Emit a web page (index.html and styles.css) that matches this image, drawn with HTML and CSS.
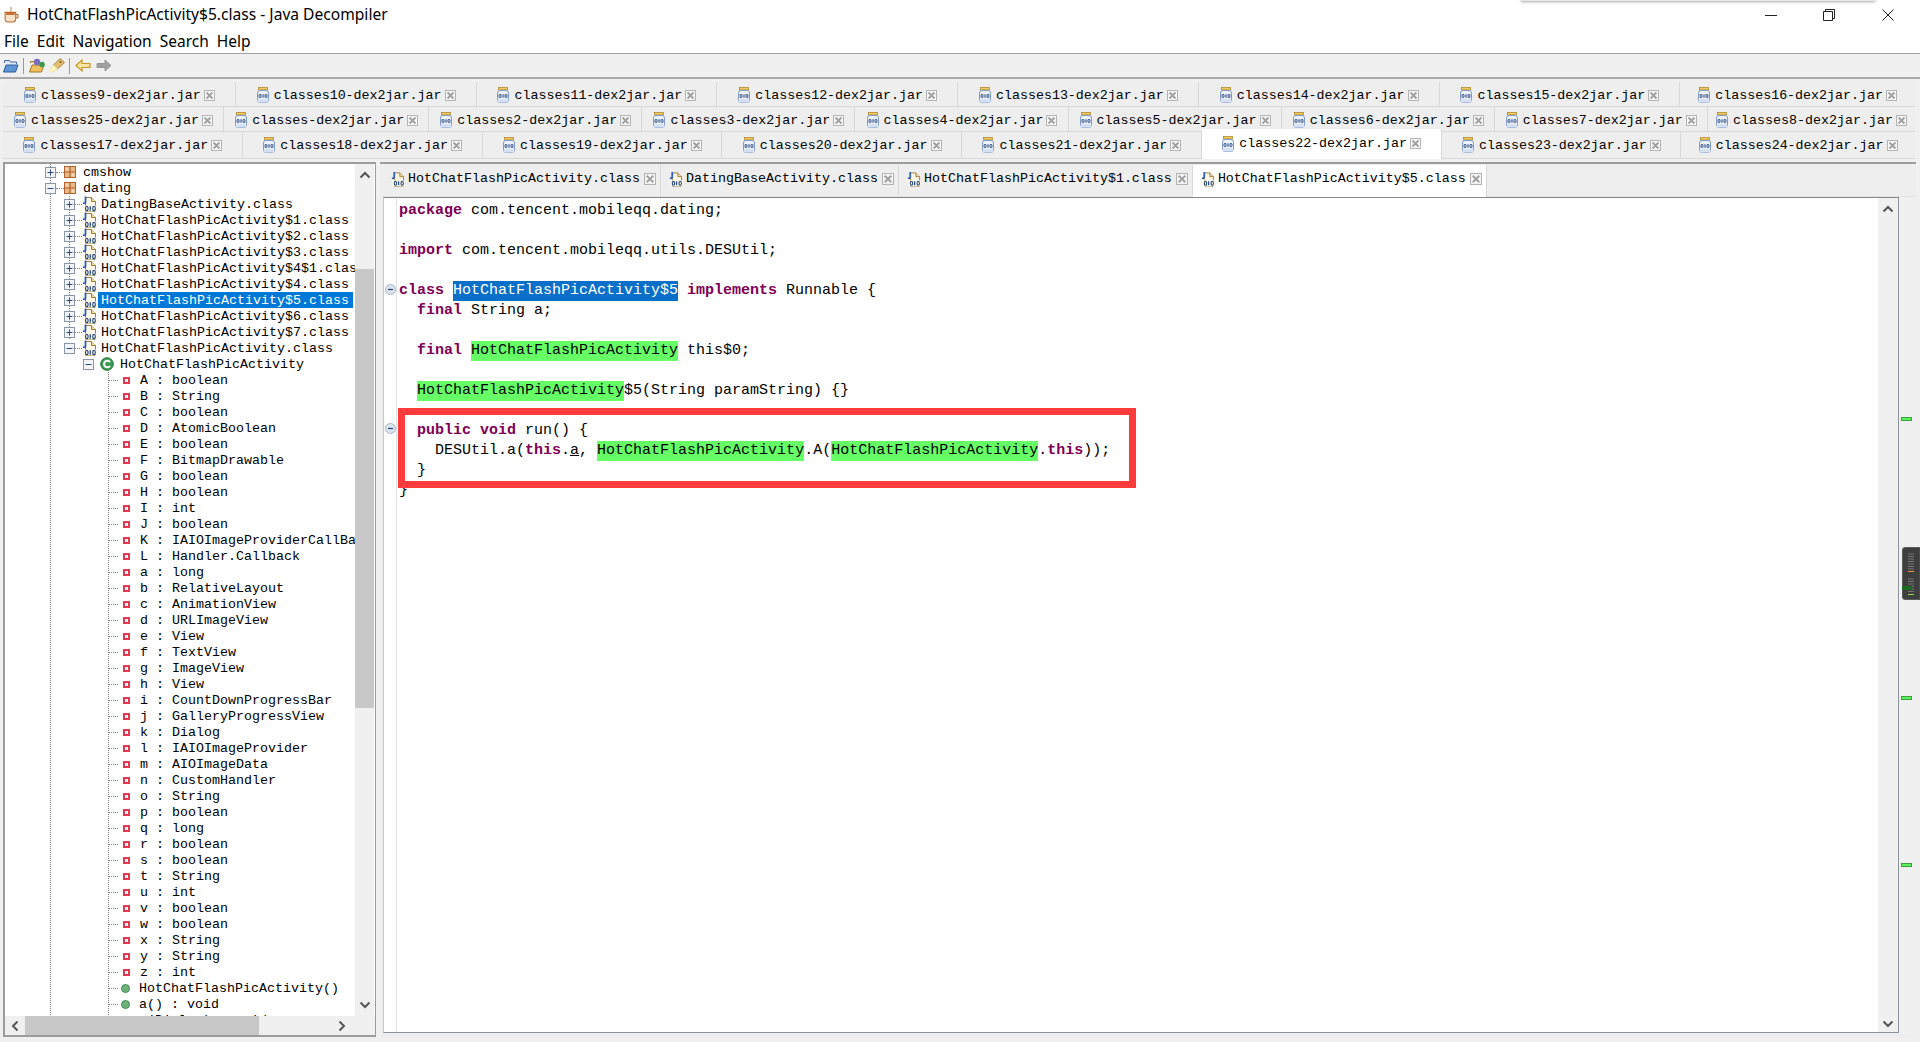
FILE: index.html
```html
<!DOCTYPE html>
<html lang="en">
<head>
<meta charset="utf-8">
<title>HotChatFlashPicActivity$5.class - Java Decompiler</title>
<link rel="stylesheet" href="styles.css">
</head>
<body>
<svg class="defs" width="0" height="0" aria-hidden="true">
  <symbol id="jar" viewBox="0 0 12 16">
    <rect x="1.5" y="0.5" width="9" height="2.5" fill="#f0c860" stroke="#b08a30" stroke-width="0.8"/>
    <rect x="0.5" y="3.5" width="11" height="12" rx="2.5" fill="#eef3fb" stroke="#7f9cc8"/>
    <rect x="0.5" y="12" width="11" height="3.5" rx="1.5" fill="#d5e0f2"/>
    <ellipse cx="3" cy="9" rx="1.1" ry="1.7" fill="none" stroke="#1d3f7a" stroke-width="0.9"/>
    <line x1="6" y1="7.2" x2="6" y2="10.8" stroke="#1d3f7a" stroke-width="1"/>
    <ellipse cx="9" cy="9" rx="1.1" ry="1.7" fill="none" stroke="#1d3f7a" stroke-width="0.9"/>
  </symbol>
  <symbol id="file" viewBox="0 0 15 16">
    <path d="M3.5 1.5h6l4 4v10h-10z" fill="#fdf8e8" stroke="#a07c34"/>
    <path d="M9.5 1.5v4h4" fill="#efe3c0" stroke="#a07c34"/>
    <path d="M3.5 0.5v5.5c0 1-1 1.500-2.500 1" fill="none" stroke="#2f5eb8" stroke-width="1.800"/>
    <rect x="1.500" y="9.500" width="13.500" height="6" fill="#fdf8e8"/>
    <ellipse cx="4.800" cy="12.500" rx="1.300" ry="2.200" fill="none" stroke="#163a78" stroke-width="1.100"/>
    <line x1="8.200" y1="10.300" x2="8.200" y2="14.700" stroke="#163a78" stroke-width="1.200"/>
    <ellipse cx="12" cy="12.500" rx="1.300" ry="2.200" fill="none" stroke="#163a78" stroke-width="1.100"/>
  </symbol>
  <symbol id="pkg" viewBox="0 0 12 12">
    <rect x="0.500" y="0.500" width="11" height="11" fill="#e8b888" stroke="#b0622c"/>
    <path d="M6 0v12M0 6h12" stroke="#b0622c" stroke-width="1.200"/>
    <path d="M1.500 1.500h3v3h-3zM7.500 7.500h3v3h-3z" fill="#f4d8b8"/>
  </symbol>
  <symbol id="plus" viewBox="0 0 11 11">
    <rect x="0.500" y="0.500" width="10" height="10" fill="#f2f4f8" stroke="#8b96a8"/>
    <path d="M2.500 5.500h6M5.500 2.500v6" stroke="#2b4a80"/>
  </symbol>
  <symbol id="minus" viewBox="0 0 11 11">
    <rect x="0.500" y="0.500" width="10" height="10" fill="#f2f4f8" stroke="#8b96a8"/>
    <path d="M2.500 5.500h6" stroke="#2b4a80"/>
  </symbol>
  <symbol id="close" viewBox="0 0 11 11">
    <rect x="0.500" y="0.500" width="10" height="10" fill="#f8f8f8" stroke="#b4b4b4"/>
    <path d="M2.500 2.500l6 6M8.500 2.500l-6 6" stroke="#a0a0a0" stroke-width="1.800"/>
  </symbol>
  <symbol id="field" viewBox="0 0 7 7">
    <rect width="7" height="7" fill="#e8374c"/>
    <rect x="2" y="2" width="3" height="3" fill="#fff"/>
  </symbol>
  <symbol id="method" viewBox="0 0 9 9">
    <circle cx="4.500" cy="4.500" r="4" fill="#6fb07a" stroke="#3f8a55"/>
  </symbol>
  <symbol id="cls" viewBox="0 0 14 14">
    <circle cx="7" cy="7" r="6.300" fill="#3f9a55" stroke="#1f7a38"/>
    <path d="M10 5a3.300 3.300 0 1 0 0 4" fill="none" stroke="#fff" stroke-width="2"/>
  </symbol>
  <symbol id="fold" viewBox="0 0 11 11">
    <circle cx="5.500" cy="5.500" r="5" fill="#dbe3ee" stroke="#a8b4c6"/>
    <path d="M3 5.500h5" stroke="#27406a" stroke-width="1.200"/>
  </symbol>
  <symbol id="up" viewBox="0 0 12 8"><path d="M1.500 6.500L6 2l4.500 4.500" fill="none" stroke="#555" stroke-width="2"/></symbol>
  <symbol id="down" viewBox="0 0 12 8"><path d="M1.500 1.500L6 6l4.500-4.500" fill="none" stroke="#555" stroke-width="2"/></symbol>
  <symbol id="left" viewBox="0 0 8 12"><path d="M6.500 1.500L2 6l4.500 4.500" fill="none" stroke="#555" stroke-width="2"/></symbol>
  <symbol id="right" viewBox="0 0 8 12"><path d="M1.500 1.500L6 6l-4.500 4.500" fill="none" stroke="#555" stroke-width="2"/></symbol>
</svg>

<header class="titlebar">
  <svg class="app-icon" viewBox="0 0 16 16">
    <path d="M8 1c-2 1 1 2-1 4" fill="none" stroke="#c08a50"/>
    <path d="M2 6h10v6c0 2-1 3-3 3H5c-2 0-3-1-3-3z" fill="#f6e2c8" stroke="#b8682c"/>
    <path d="M3 6.500h8v2H3z" fill="#c8702c"/>
    <path d="M12 8h2v3h-2" fill="none" stroke="#b8682c"/>
  </svg>
  <span class="title">HotChatFlashPicActivity$5.class - Java Decompiler</span>
  <div class="win-controls">
    <span class="win-btn"><svg width="12" height="12" viewBox="0 0 12 12"><path d="M0 6.500h12" stroke="#222"/></svg></span>
    <span class="win-btn"><svg width="12" height="12" viewBox="0 0 12 12"><path d="M.5 2.500h9v9h-9zM2.500 2.500v-2h9v9h-2" fill="none" stroke="#222"/></svg></span>
    <span class="win-btn"><svg width="12" height="12" viewBox="0 0 12 12"><path d="M.5.500l11 11M11.500.500l-11 11" stroke="#222"/></svg></span>
  </div>
</header>
<nav class="menubar"><span>File</span><span>Edit</span><span>Navigation</span><span>Search</span><span>Help</span></nav>
<div class="toolbar">
  <svg class="tb-icon" viewBox="0 0 16 15"><path d="M1.500 5V2.500h5l1 1.500h6v2" fill="#dce8f8" stroke="#4a6a9c"/><path d="M.5 14L3 7h12l-2.500 7z" fill="#5c96d8" stroke="#2f5a96"/></svg>
  <span class="tb-sep"></span>
  <svg class="tb-icon" viewBox="0 0 16 15"><path d="M1.500 5V3.500h4l1 1.500h6v2" fill="#f8e0a0" stroke="#a07820"/><path d="M.5 14L3 7h12l-2.500 7z" fill="#f0c060" stroke="#a07820"/><circle cx="8" cy="4" r="3.200" fill="#7a6cc0"/><circle cx="13" cy="6.500" r="2.800" fill="#3a9a50"/></svg>
  <svg class="tb-icon" viewBox="0 0 16 15"><path d="M11 .5l4.500 4-7 6.500-4-4z" fill="#e4bc70" stroke="#a88a44"/><path d="M4.500 7l4 4-6 3.500-2-2z" fill="#fff8c8" stroke="#ecdc98"/><circle cx="11.500" cy="4" r="1.100" fill="#806020"/></svg>
  <span class="tb-sep"></span>
  <svg class="tb-icon" viewBox="0 0 16 14"><path d="M1 7l6-5.500V5h8v4H7v3.500z" fill="#fbe6a8" stroke="#c8961e" stroke-width="1.200"/></svg>
  <svg class="tb-icon tb-next" viewBox="0 0 16 14"><path d="M15 7L9 1.500V5H1v4h8v3.500z" fill="#a0a0a0" stroke="#969696"/></svg>
</div>

<section class="tab-folder">
  <div class="tab-row">
    <div class="tab"><svg class="i-jar"><use href="#jar"/></svg><span class="tab-text">classes9-dex2jar.jar</span><svg class="i-close"><use href="#close"/></svg></div>
    <div class="tab"><svg class="i-jar"><use href="#jar"/></svg><span class="tab-text">classes10-dex2jar.jar</span><svg class="i-close"><use href="#close"/></svg></div>
    <div class="tab"><svg class="i-jar"><use href="#jar"/></svg><span class="tab-text">classes11-dex2jar.jar</span><svg class="i-close"><use href="#close"/></svg></div>
    <div class="tab"><svg class="i-jar"><use href="#jar"/></svg><span class="tab-text">classes12-dex2jar.jar</span><svg class="i-close"><use href="#close"/></svg></div>
    <div class="tab"><svg class="i-jar"><use href="#jar"/></svg><span class="tab-text">classes13-dex2jar.jar</span><svg class="i-close"><use href="#close"/></svg></div>
    <div class="tab"><svg class="i-jar"><use href="#jar"/></svg><span class="tab-text">classes14-dex2jar.jar</span><svg class="i-close"><use href="#close"/></svg></div>
    <div class="tab"><svg class="i-jar"><use href="#jar"/></svg><span class="tab-text">classes15-dex2jar.jar</span><svg class="i-close"><use href="#close"/></svg></div>
    <div class="tab"><svg class="i-jar"><use href="#jar"/></svg><span class="tab-text">classes16-dex2jar.jar</span><svg class="i-close"><use href="#close"/></svg></div>
  </div>
  <div class="tab-row">
    <div class="tab"><svg class="i-jar"><use href="#jar"/></svg><span class="tab-text">classes25-dex2jar.jar</span><svg class="i-close"><use href="#close"/></svg></div>
    <div class="tab"><svg class="i-jar"><use href="#jar"/></svg><span class="tab-text">classes-dex2jar.jar</span><svg class="i-close"><use href="#close"/></svg></div>
    <div class="tab"><svg class="i-jar"><use href="#jar"/></svg><span class="tab-text">classes2-dex2jar.jar</span><svg class="i-close"><use href="#close"/></svg></div>
    <div class="tab"><svg class="i-jar"><use href="#jar"/></svg><span class="tab-text">classes3-dex2jar.jar</span><svg class="i-close"><use href="#close"/></svg></div>
    <div class="tab"><svg class="i-jar"><use href="#jar"/></svg><span class="tab-text">classes4-dex2jar.jar</span><svg class="i-close"><use href="#close"/></svg></div>
    <div class="tab"><svg class="i-jar"><use href="#jar"/></svg><span class="tab-text">classes5-dex2jar.jar</span><svg class="i-close"><use href="#close"/></svg></div>
    <div class="tab"><svg class="i-jar"><use href="#jar"/></svg><span class="tab-text">classes6-dex2jar.jar</span><svg class="i-close"><use href="#close"/></svg></div>
    <div class="tab"><svg class="i-jar"><use href="#jar"/></svg><span class="tab-text">classes7-dex2jar.jar</span><svg class="i-close"><use href="#close"/></svg></div>
    <div class="tab"><svg class="i-jar"><use href="#jar"/></svg><span class="tab-text">classes8-dex2jar.jar</span><svg class="i-close"><use href="#close"/></svg></div>
  </div>
  <div class="tab-row tab-row-last">
    <div class="tab"><svg class="i-jar"><use href="#jar"/></svg><span class="tab-text">classes17-dex2jar.jar</span><svg class="i-close"><use href="#close"/></svg></div>
    <div class="tab"><svg class="i-jar"><use href="#jar"/></svg><span class="tab-text">classes18-dex2jar.jar</span><svg class="i-close"><use href="#close"/></svg></div>
    <div class="tab"><svg class="i-jar"><use href="#jar"/></svg><span class="tab-text">classes19-dex2jar.jar</span><svg class="i-close"><use href="#close"/></svg></div>
    <div class="tab"><svg class="i-jar"><use href="#jar"/></svg><span class="tab-text">classes20-dex2jar.jar</span><svg class="i-close"><use href="#close"/></svg></div>
    <div class="tab"><svg class="i-jar"><use href="#jar"/></svg><span class="tab-text">classes21-dex2jar.jar</span><svg class="i-close"><use href="#close"/></svg></div>
    <div class="tab tab-active"><svg class="i-jar"><use href="#jar"/></svg><span class="tab-text">classes22-dex2jar.jar</span><svg class="i-close"><use href="#close"/></svg></div>
    <div class="tab"><svg class="i-jar"><use href="#jar"/></svg><span class="tab-text">classes23-dex2jar.jar</span><svg class="i-close"><use href="#close"/></svg></div>
    <div class="tab"><svg class="i-jar"><use href="#jar"/></svg><span class="tab-text">classes24-dex2jar.jar</span><svg class="i-close"><use href="#close"/></svg></div>
  </div>
</section>

<main class="workspace">
  <aside class="tree-panel">
    <div class="tree-body">
      <div class="tree">
        <div class="row l1"><svg class="exp"><use href="#plus"/></svg><i class="conn"></i><svg class="i-pkg"><use href="#pkg"/></svg><span class="lbl">cmshow</span></div>
        <div class="row l1"><svg class="exp"><use href="#minus"/></svg><i class="conn"></i><svg class="i-pkg"><use href="#pkg"/></svg><span class="lbl">dating</span></div>
        <div class="row l2"><svg class="exp"><use href="#plus"/></svg><i class="conn"></i><svg class="i-file"><use href="#file"/></svg><span class="lbl">DatingBaseActivity.class</span></div>
        <div class="row l2"><svg class="exp"><use href="#plus"/></svg><i class="conn"></i><svg class="i-file"><use href="#file"/></svg><span class="lbl">HotChatFlashPicActivity$1.class</span></div>
        <div class="row l2"><svg class="exp"><use href="#plus"/></svg><i class="conn"></i><svg class="i-file"><use href="#file"/></svg><span class="lbl">HotChatFlashPicActivity$2.class</span></div>
        <div class="row l2"><svg class="exp"><use href="#plus"/></svg><i class="conn"></i><svg class="i-file"><use href="#file"/></svg><span class="lbl">HotChatFlashPicActivity$3.class</span></div>
        <div class="row l2"><svg class="exp"><use href="#plus"/></svg><i class="conn"></i><svg class="i-file"><use href="#file"/></svg><span class="lbl">HotChatFlashPicActivity$4$1.class</span></div>
        <div class="row l2"><svg class="exp"><use href="#plus"/></svg><i class="conn"></i><svg class="i-file"><use href="#file"/></svg><span class="lbl">HotChatFlashPicActivity$4.class</span></div>
        <div class="row l2"><svg class="exp"><use href="#plus"/></svg><i class="conn"></i><svg class="i-file"><use href="#file"/></svg><span class="lbl lbl-sel">HotChatFlashPicActivity$5.class</span></div>
        <div class="row l2"><svg class="exp"><use href="#plus"/></svg><i class="conn"></i><svg class="i-file"><use href="#file"/></svg><span class="lbl">HotChatFlashPicActivity$6.class</span></div>
        <div class="row l2"><svg class="exp"><use href="#plus"/></svg><i class="conn"></i><svg class="i-file"><use href="#file"/></svg><span class="lbl">HotChatFlashPicActivity$7.class</span></div>
        <div class="row l2 l2-end"><svg class="exp"><use href="#minus"/></svg><i class="conn"></i><svg class="i-file"><use href="#file"/></svg><span class="lbl">HotChatFlashPicActivity.class</span></div>
        <div class="row l3"><svg class="exp"><use href="#minus"/></svg><svg class="i-cls"><use href="#cls"/></svg><span class="lbl">HotChatFlashPicActivity</span></div>
        <div class="row l4"><i class="conn"></i><svg class="i-field"><use href="#field"/></svg><span class="lbl">A : boolean</span></div>
        <div class="row l4"><i class="conn"></i><svg class="i-field"><use href="#field"/></svg><span class="lbl">B : String</span></div>
        <div class="row l4"><i class="conn"></i><svg class="i-field"><use href="#field"/></svg><span class="lbl">C : boolean</span></div>
        <div class="row l4"><i class="conn"></i><svg class="i-field"><use href="#field"/></svg><span class="lbl">D : AtomicBoolean</span></div>
        <div class="row l4"><i class="conn"></i><svg class="i-field"><use href="#field"/></svg><span class="lbl">E : boolean</span></div>
        <div class="row l4"><i class="conn"></i><svg class="i-field"><use href="#field"/></svg><span class="lbl">F : BitmapDrawable</span></div>
        <div class="row l4"><i class="conn"></i><svg class="i-field"><use href="#field"/></svg><span class="lbl">G : boolean</span></div>
        <div class="row l4"><i class="conn"></i><svg class="i-field"><use href="#field"/></svg><span class="lbl">H : boolean</span></div>
        <div class="row l4"><i class="conn"></i><svg class="i-field"><use href="#field"/></svg><span class="lbl">I : int</span></div>
        <div class="row l4"><i class="conn"></i><svg class="i-field"><use href="#field"/></svg><span class="lbl">J : boolean</span></div>
        <div class="row l4"><i class="conn"></i><svg class="i-field"><use href="#field"/></svg><span class="lbl">K : IAIOImageProviderCallBack</span></div>
        <div class="row l4"><i class="conn"></i><svg class="i-field"><use href="#field"/></svg><span class="lbl">L : Handler.Callback</span></div>
        <div class="row l4"><i class="conn"></i><svg class="i-field"><use href="#field"/></svg><span class="lbl">a : long</span></div>
        <div class="row l4"><i class="conn"></i><svg class="i-field"><use href="#field"/></svg><span class="lbl">b : RelativeLayout</span></div>
        <div class="row l4"><i class="conn"></i><svg class="i-field"><use href="#field"/></svg><span class="lbl">c : AnimationView</span></div>
        <div class="row l4"><i class="conn"></i><svg class="i-field"><use href="#field"/></svg><span class="lbl">d : URLImageView</span></div>
        <div class="row l4"><i class="conn"></i><svg class="i-field"><use href="#field"/></svg><span class="lbl">e : View</span></div>
        <div class="row l4"><i class="conn"></i><svg class="i-field"><use href="#field"/></svg><span class="lbl">f : TextView</span></div>
        <div class="row l4"><i class="conn"></i><svg class="i-field"><use href="#field"/></svg><span class="lbl">g : ImageView</span></div>
        <div class="row l4"><i class="conn"></i><svg class="i-field"><use href="#field"/></svg><span class="lbl">h : View</span></div>
        <div class="row l4"><i class="conn"></i><svg class="i-field"><use href="#field"/></svg><span class="lbl">i : CountDownProgressBar</span></div>
        <div class="row l4"><i class="conn"></i><svg class="i-field"><use href="#field"/></svg><span class="lbl">j : GalleryProgressView</span></div>
        <div class="row l4"><i class="conn"></i><svg class="i-field"><use href="#field"/></svg><span class="lbl">k : Dialog</span></div>
        <div class="row l4"><i class="conn"></i><svg class="i-field"><use href="#field"/></svg><span class="lbl">l : IAIOImageProvider</span></div>
        <div class="row l4"><i class="conn"></i><svg class="i-field"><use href="#field"/></svg><span class="lbl">m : AIOImageData</span></div>
        <div class="row l4"><i class="conn"></i><svg class="i-field"><use href="#field"/></svg><span class="lbl">n : CustomHandler</span></div>
        <div class="row l4"><i class="conn"></i><svg class="i-field"><use href="#field"/></svg><span class="lbl">o : String</span></div>
        <div class="row l4"><i class="conn"></i><svg class="i-field"><use href="#field"/></svg><span class="lbl">p : boolean</span></div>
        <div class="row l4"><i class="conn"></i><svg class="i-field"><use href="#field"/></svg><span class="lbl">q : long</span></div>
        <div class="row l4"><i class="conn"></i><svg class="i-field"><use href="#field"/></svg><span class="lbl">r : boolean</span></div>
        <div class="row l4"><i class="conn"></i><svg class="i-field"><use href="#field"/></svg><span class="lbl">s : boolean</span></div>
        <div class="row l4"><i class="conn"></i><svg class="i-field"><use href="#field"/></svg><span class="lbl">t : String</span></div>
        <div class="row l4"><i class="conn"></i><svg class="i-field"><use href="#field"/></svg><span class="lbl">u : int</span></div>
        <div class="row l4"><i class="conn"></i><svg class="i-field"><use href="#field"/></svg><span class="lbl">v : boolean</span></div>
        <div class="row l4"><i class="conn"></i><svg class="i-field"><use href="#field"/></svg><span class="lbl">w : boolean</span></div>
        <div class="row l4"><i class="conn"></i><svg class="i-field"><use href="#field"/></svg><span class="lbl">x : String</span></div>
        <div class="row l4"><i class="conn"></i><svg class="i-field"><use href="#field"/></svg><span class="lbl">y : String</span></div>
        <div class="row l4"><i class="conn"></i><svg class="i-field"><use href="#field"/></svg><span class="lbl">z : int</span></div>
        <div class="row l4"><i class="conn"></i><svg class="i-method"><use href="#method"/></svg><span class="lbl">HotChatFlashPicActivity()</span></div>
        <div class="row l4"><i class="conn"></i><svg class="i-method"><use href="#method"/></svg><span class="lbl">a() : void</span></div>
        <div class="row l4"><i class="conn"></i><svg class="i-method"><use href="#method"/></svg><span class="lbl">a(Dialog) : void</span></div>
      </div>
      <div class="vscroll tree-vscroll">
        <svg class="chev-v"><use href="#up"/></svg>
        <div class="tree-track"><div class="tree-thumb"></div></div>
        <svg class="chev-v"><use href="#down"/></svg>
      </div>
    </div>
    <div class="hscroll">
      <svg class="chev-h"><use href="#left"/></svg>
      <div class="hthumb"></div>
      <svg class="chev-h chev-right"><use href="#right"/></svg>
    </div>
  </aside>

  <section class="editor-panel">
    <div class="editor-tabs">
      <div class="etab"><svg class="i-file"><use href="#file"/></svg><span class="tab-text">HotChatFlashPicActivity.class</span><svg class="i-close"><use href="#close"/></svg></div>
      <div class="etab"><svg class="i-file"><use href="#file"/></svg><span class="tab-text">DatingBaseActivity.class</span><svg class="i-close"><use href="#close"/></svg></div>
      <div class="etab"><svg class="i-file"><use href="#file"/></svg><span class="tab-text">HotChatFlashPicActivity$1.class</span><svg class="i-close"><use href="#close"/></svg></div>
      <div class="etab etab-active"><svg class="i-file"><use href="#file"/></svg><span class="tab-text">HotChatFlashPicActivity$5.class</span><svg class="i-close"><use href="#close"/></svg></div>
    </div>
    <div class="editor-wrap">
      <div class="editor">
        <div class="gutter">
          <svg class="i-fold fold-class"><use href="#fold"/></svg>
          <svg class="i-fold fold-run"><use href="#fold"/></svg>
        </div>
        <div class="code">
          <div class="ln"><b>package</b> com.tencent.mobileqq.dating;</div>
          <div class="ln"></div>
          <div class="ln"><b>import</b> com.tencent.mobileqq.utils.DESUtil;</div>
          <div class="ln"></div>
          <div class="ln"><b>class</b> <span class="sel">HotChatFlashPicActivity$5</span> <b>implements</b> Runnable {</div>
          <div class="ln">  <b>final</b> String a;</div>
          <div class="ln"></div>
          <div class="ln">  <b>final</b> <span class="hit">HotChatFlashPicActivity</span> this$0;</div>
          <div class="ln"></div>
          <div class="ln">  <span class="hit">HotChatFlashPicActivity</span>$5(String paramString) {}</div>
          <div class="ln"></div>
          <div class="ln">  <b>public void</b> run() {</div>
          <div class="ln">    DESUtil.a(<b>this</b>.<u>a</u>, <span class="hit">HotChatFlashPicActivity</span>.A(<span class="hit">HotChatFlashPicActivity</span>.<b>this</b>));</div>
          <div class="ln">  }</div>
          <div class="ln">}</div>
          <div class="red-box"></div>
        </div>
        <div class="vscroll editor-vscroll">
          <svg class="chev-v"><use href="#up"/></svg>
          <svg class="chev-v"><use href="#down"/></svg>
        </div>
      </div>
      <div class="ruler">
        <i class="mark mark-1"></i>
        <i class="mark mark-2"></i>
        <i class="mark mark-3"></i>
      </div>
    </div>
  </section>
</main>

<div class="top-shadow"></div>
<svg class="float-widget" width="18" height="53" viewBox="0 0 18 53">
  <path d="M3 .5H18v52H3a2.500 2.500 0 0 1-2.500-2.500V3A2.500 2.500 0 0 1 3 .5z" fill="#3e3e3e" stroke="#5a5a5a"/>
  <path d="M6 7h6M6 9.500h6M6 12h6M6 14.500h6M6 17h6M6 19.500h6M6 22h6M6 32h6M6 34.500h6M6 37h6M6 39.500h6M6 42h6M6 44.500h6" stroke="#777"/>
  <path d="M6 24.500h6" stroke="#e89a2c"/>
  <path d="M6 47.500h6" stroke="#8fe04c"/>
  <rect x="0" y="39" width="10" height="4" fill="#1a6a24"/>
</svg>
</body>
</html>
```
FILE: styles.css
```css
* { box-sizing: border-box; }
html, body { margin: 0; padding: 0; }
body {
  width: 1920px;
  height: 1042px;
  overflow: hidden;
  background: #f0f0f0;
  display: flex;
  flex-direction: column;
  font-family: "Liberation Mono", monospace;
  font-size: 13.33px;
  color: #000;
  position: relative;
}
.defs { position: absolute; }
svg { display: block; flex: none; }

.titlebar {
  height: 29px;
  background: #fff;
  display: flex;
  align-items: center;
  padding-left: 3px;
  flex: none;
}
.app-icon { width: 17px; height: 17px; margin-right: 7px; }
.title { font-family: "Noto Sans", sans-serif; font-size: 15.6px; color: #000; margin-bottom: 2px; }
.win-controls { margin-left: auto; display: flex; padding-right: 3px; }
.win-btn { width: 58.5px; display: flex; justify-content: center; align-items: center; height: 29px; }

.menubar {
  height: 25px;
  background: #fff;
  border-bottom: 1px solid #a0a0a0;
  display: flex;
  gap: 8px;
  align-items: center;
  padding: 0 0 0 4px;
  font-family: "Noto Sans", sans-serif;
  font-size: 15.5px;
  flex: none;
}

.toolbar {
  height: 25px;
  background: #f0f0f0;
  border-bottom: 2px solid #a9a9a9;
  display: flex;
  align-items: center;
  padding-left: 3px;
  flex: none;
}
.tb-icon { width: 16px; height: 15px; margin-right: 4px; }
.tb-next { margin-left: 1px; }
.tb-sep { width: 1px; height: 16px; background: #9a9a9a; margin: 0 5px 0 0; }

.tab-folder { padding: 3px 5px 3px 3px; flex: none; }
.tab-row { display: flex; height: 25px; border-bottom: 1px solid #d8d8d8; background: #eeeeee; }
.tab-row-last { height: 27px; }
.tab {
  flex: 1 1 auto;
  display: flex;
  align-items: center;
  justify-content: center;
  padding: 2px 2px 0 3px;
  border-right: 1px solid #d8d8d8;
  white-space: nowrap;
}
.tab-row-last .tab { padding-top: 0; }
.tab-row .tab:last-child { border-right: 0; padding-left: 0; padding-right: 0; }
.tab-row-last .tab-active {
  background: #fff;
  height: 30px;
  margin-top: -3px;
  padding-bottom: 1px;
}
.tab-text { color: #000; }
.i-jar { width: 12px; height: 16px; margin-right: 5px; }
.i-close { width: 11px; height: 11px; margin-left: 3px; }

.workspace {
  flex: 1;
  min-height: 0;
  display: flex;
  gap: 4px;
  padding: 0 4px 5px 3px;
}

.tree-panel {
  width: 373px;
  border: 2px solid #9c9c9c;
  border-right-width: 1px;
  display: flex;
  flex-direction: column;
  background: #fff;
}
.tree-body { flex: 1; min-height: 0; display: flex; }
.tree { width: 350px; overflow: hidden; background: #fff; }

.row {
  height: 16px;
  display: flex;
  align-items: center;
  white-space: nowrap;
  background-repeat: repeat-y;
  background-size: 1px 2px;
  background-image: linear-gradient(#808080 50%, transparent 50%);
  background-position: 45px 0;
}
.lbl { line-height: 18px; height: 16px; color: #000; }
.lbl-sel { background: #0078d7; color: #fff; padding: 0 4px 0 3px; margin-left: -3px; }
.exp { width: 11px; height: 11px; }
.conn { display: block; border-top: 1px dotted #808080; height: 0; flex: none; }

.l1 { padding-left: 40px; }
.l1 .conn { width: 8px; }
.i-pkg { width: 12px; height: 12px; margin-right: 7px; }

.l2 {
  padding-left: 59px;
  background-image: linear-gradient(#808080 50%, transparent 50%), linear-gradient(#808080 50%, transparent 50%);
  background-position: 45px 0, 64px 0;
}
.l2-end { background-image: linear-gradient(#808080 50%, transparent 50%); background-position: 45px 0; }
.l2 .conn { width: 7px; }
.i-file { width: 15px; height: 16px; margin-right: 4px; }

.l3 { padding-left: 78px; }
.i-cls { width: 14px; height: 14px; margin: 0 6px 0 6px; }

.l4 {
  padding-left: 103px;
  background-image: linear-gradient(#808080 50%, transparent 50%), linear-gradient(#808080 50%, transparent 50%);
  background-position: 45px 0, 103px 0;
}
.l4 .conn { width: 10px; }
.i-field { width: 7px; height: 7px; margin: 0 10px 0 5px; }
.i-method { width: 9px; height: 9px; margin: 0 9px 0 3px; }

.vscroll { background: #f0f0f0; display: flex; flex-direction: column; align-items: center; justify-content: space-between; flex: none; }
.tree-vscroll { width: 19px; background: #f0f0f0; padding: 7px 0 7px; }
.tree-track { flex: 1; width: 100%; padding: 90px 0 293px; }
.tree-thumb { height: 100%; background: #c8c8c8; width: 19px; }
.chev-v { width: 12px; height: 8px; }
.chev-h { width: 8px; height: 12px; }

.hscroll {
  height: 19px;
  background: #f0f0f0;
  display: flex;
  align-items: center;
  padding-left: 6px;
  flex: none;
}
.hthumb { width: 234px; height: 19px; background: #c8c8c8; margin-left: 6px; }
.chev-right { margin-left: 79px; }

.editor-panel {
  flex: 1;
  min-width: 0;
  border-top: 2px solid #9c9c9c;
  display: flex;
  flex-direction: column;
  background: #eeeeee;
  padding: 0 0 4px 3px;
}
.editor-tabs { height: 33px; display: flex; flex: none; padding-top: 1px; border-bottom: 1px solid #e0e0e0; }
.etab {
  display: flex;
  align-items: center;
  height: 30px;
  padding: 0 4px 3px 8px;
  border-right: 1px solid #d8d8d8;
  white-space: nowrap;
}
.etab .i-file { width: 14px; margin-right: 3px; }
.etab .i-close { width: 12px; height: 12px; margin-left: 4px; }
.etab-active { background: #fff; height: 32px; padding-bottom: 5px; }

.editor-wrap { flex: 1; min-height: 0; display: flex; }
.editor {
  flex: 1;
  min-width: 0;
  display: flex;
  background: #fff;
  border-top: 1px solid #888;
  border-right: 1px solid #8a929c;
  border-bottom: 1px solid #8a929c;
  border-left: 1px solid #c8c8c8;
}
.gutter { width: 13px; border-right: 1px solid #e0e0e0; flex: none; background: #fff; }
.i-fold { width: 11px; height: 11px; margin-left: 1px; }
.fold-class { margin-top: 86px; }
.fold-run { margin-top: 128px; }

.code {
  flex: 1;
  min-width: 0;
  position: relative;
  padding: 3px 0 0 2px;
  font-size: 15px;
  line-height: 20px;
  color: #000;
}
.ln { height: 20px; white-space: pre; }
.code b { color: #7f0055; font-weight: 700; }
.sel { background: #0a6fc8; color: #fff; display: inline-block; height: 20px; }
.hit { background: #66ff66; display: inline-block; height: 20px; }
.red-box {
  position: absolute;
  left: 1px;
  top: 210px;
  width: 738px;
  height: 80px;
  border: 7px solid #ff3b3b;
}
.editor-vscroll { width: 20px; padding: 7px 1px 4px 0; }

.ruler { width: 17px; background: #f0f0f0; display: flex; flex-direction: column; flex: none; }
.mark { display: block; width: 11px; height: 4px; background: #5cf05c; border: 1px solid #3ca03c; margin-left: 2px; flex: none; }
.mark-1 { margin-top: 220px; }
.mark-2 { margin-top: 275px; }
.mark-3 { margin-top: 163px; }

.top-shadow {
  position: absolute;
  left: 1521px;
  top: -4px;
  width: 354px;
  height: 5px;
  background: #e8e8e8;
  box-shadow: 0 1px 3px rgba(0,0,0,.35);
}
.float-widget { position: absolute; left: 1902px; top: 547px; }
```
